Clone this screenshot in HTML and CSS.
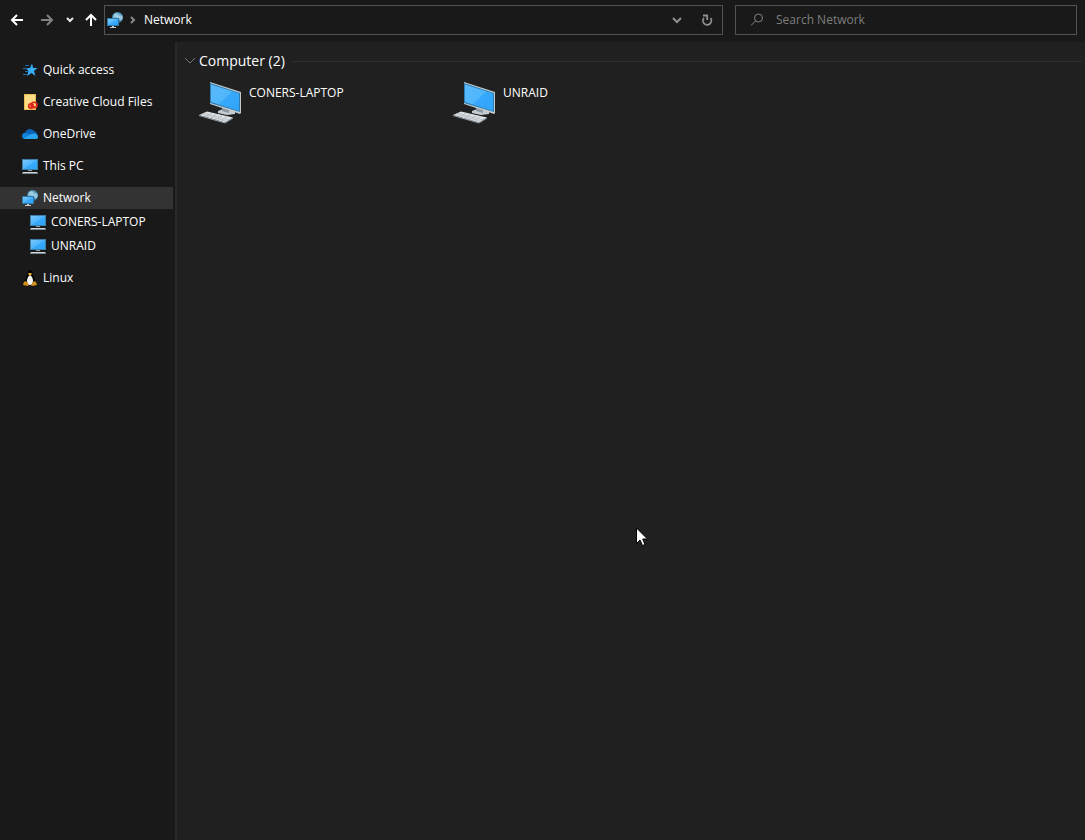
FILE: index.html
```
<!DOCTYPE html>
<html lang="en">
<head>
<meta charset="UTF-8">
<title>Network</title>
<link rel="stylesheet" href="styles.css">
</head>
<body>

<!-- shared icons -->
<svg class="defs" aria-hidden="true">
	<defs>
		<linearGradient id="screen" x1="0" y1="0" x2="1" y2="1">
			<stop offset="0" stop-color="#7cc8fb" />
			<stop offset="0.5" stop-color="#4fb5fa" />
			<stop offset="0.52" stop-color="#35a9fb" />
			<stop offset="1" stop-color="#2ea5fc" />
		</linearGradient>
		<linearGradient id="bigScreen" x1="0" y1="0" x2="1" y2="1">
			<stop offset="0" stop-color="#58b9fb" />
			<stop offset="0.5" stop-color="#50b6fb" />
			<stop offset="0.52" stop-color="#37a9fb" />
			<stop offset="1" stop-color="#2fa4fb" />
		</linearGradient>
		<radialGradient id="globe" cx="0.5" cy="0.4" r="0.6">
			<stop offset="0" stop-color="#b5dcec" />
			<stop offset="0.5" stop-color="#5b9fc0" />
			<stop offset="1" stop-color="#2b6486" />
		</radialGradient>
	</defs>
	<symbol id="pc" viewBox="0 0 16 16">
		<rect x="0" y="1" width="16" height="11" fill="#3c7fa8" />
		<rect x="1" y="2" width="14" height="9" fill="url(#screen)" />
		<rect x="6" y="12" width="4" height="1" fill="#8fa0ad" />
		<path d="M1 14h14l1 1v1H0v-1z" fill="#7c8995" />
		<path d="M1 14h14v1H1z" fill="#cfd8df" />
	</symbol>
	<symbol id="network" viewBox="0 0 16 16">
		<circle cx="10.500" cy="5.500" r="5.500" fill="url(#globe)" />
		<path d="M7 2l3-1 1 2-2 2-3 1zM12 4l3-1 1 3-2 3-2-2z" fill="#a9d6e9" opacity=".75" />
		<rect x="0" y="6" width="12" height="8" fill="#3178a4" />
		<rect x="1" y="7" width="10" height="6" fill="url(#screen)" />
		<path d="M5 14h2v1h2v1H3v-1h2z" fill="#c2ccd3" />
	</symbol>
	<symbol id="desktop" viewBox="0 0 44 42">
		<path d="M20 29l5-2 12 2v3l-8 1-9-2z" fill="#c5cdd2" />
		<path d="M24 25l7 2v4l-7-2z" fill="#8c979f" />
		<path d="M12 0l31 10v21l-1 1L12 22z" fill="#c3c9cd" />
		<path d="M12 1l30 10v19L12 21z" fill="#2e7db0" />
		<path d="M13 2.500l28 9V29L13 20z" fill="url(#bigScreen)" />
		<path d="M9 29.500l26 6-8 5L1 33z" fill="#dfe3e6" />
		<path d="M1 33l26 7.500 8-5v1l-8 5L1 34z" fill="#98a2aa" />
		<path d="M6 31l25 7M4 32l25 7.500M14 31l-6 4M19 32l-6 4M24 33.500l-6 4M29 34.500l-6 4" fill="none" stroke="#a4adb4" stroke-width=".6" />
	</symbol>
</svg>

<header class="toolbar">
	<nav class="history" aria-label="History">
		<button type="button" class="navBtn" aria-label="Back">
			<svg width="14" height="14" viewBox="0 0 14 14"><path d="M13 7H2M7 2L2 7l5 5" stroke="#fff" stroke-width="2" fill="none" /></svg>
		</button>
		<button type="button" class="navBtn" aria-label="Forward">
			<svg width="14" height="14" viewBox="0 0 14 14"><path d="M1 7h11M7 2l5 5-5 5" stroke="#838383" stroke-width="2" fill="none" /></svg>
		</button>
		<button type="button" class="navBtn small" aria-label="Recent locations">
			<svg width="8" height="6" viewBox="0 0 8 6"><path d="M1 1l3 3 3-3" stroke="#e8e8e8" stroke-width="2" fill="none" /></svg>
		</button>
		<button type="button" class="navBtn up" aria-label="Up">
			<svg width="14" height="14" viewBox="0 0 14 14"><path d="M7 13V2M2 7l5-5 5 5" stroke="#fff" stroke-width="2" fill="none" /></svg>
		</button>
	</nav>

	<div class="address">
		<svg class="icon" aria-hidden="true"><use href="#network" /></svg>
		<svg class="crumbArrow" width="6" height="8" viewBox="0 0 6 8" aria-hidden="true"><path d="M1 1l3 3-3 3" stroke="#8a8a8a" stroke-width="2" fill="none" /></svg>
		<a class="crumb" href="#">Network</a>
		<button type="button" class="boxBtn" aria-label="Previous locations">
			<svg width="10" height="8" viewBox="0 0 10 8"><path d="M1 2l4 4 4-4" stroke="#8f8f8f" stroke-width="2" fill="none" /></svg>
		</button>
		<button type="button" class="boxBtn" aria-label="Refresh">
			<svg width="12" height="12" viewBox="0 0 12 12"><path d="M3 3.800a4.200 4.200 0 1 0 6.500.200" stroke="#8f8f8f" stroke-width="1.800" fill="none" /><path d="M2 1.500h4.200V6" stroke="#8f8f8f" stroke-width="1.800" fill="none" /></svg>
		</button>
	</div>

	<label class="search">
		<svg width="14" height="14" viewBox="0 0 14 14" aria-hidden="true"><circle cx="8.500" cy="5" r="4" stroke="#838383" fill="none" /><path d="M5.500 8L1 12.500" stroke="#838383" fill="none" /></svg>
		<input type="search" placeholder="Search Network" aria-label="Search Network">
	</label>
</header>

<div class="body">
	<nav class="sidebar" aria-label="Navigation pane">
		<ul class="tree">
			<li>
				<a href="#">
					<svg class="icon" viewBox="0 0 16 16" aria-hidden="true">
						<path d="M10 1.500l1.200 4.500H15.500l-3.500 3 1.500 5-4-3L5 14l1.500-5L3.500 6H8z" fill="#35aef8" />
						<path d="M3 3.500h4M1 6.500h5M3 9.500h3M1 12.500h4" stroke="#1b6fae" fill="none" />
					</svg>
					Quick access
				</a>
			</li>
			<li>
				<a href="#">
					<svg class="icon" viewBox="0 0 16 16" aria-hidden="true">
						<path d="M2 0h12v16H2z" fill="#e9bc55" />
						<path d="M3 1h10v14H3z" fill="#fddc86" />
						<ellipse cx="9" cy="12" rx="2.300" ry="2.200" fill="none" stroke="#d91a14" stroke-width="1.600" />
						<ellipse cx="12" cy="11" rx="3" ry="2.700" fill="none" stroke="#e2231a" stroke-width="1.600" />
						<path d="M9 10l4 3.500" stroke="#e2231a" stroke-width="1.500" fill="none" />
					</svg>
					Creative Cloud Files
				</a>
			</li>
			<li>
				<a href="#">
					<svg class="icon" viewBox="0 0 16 16" aria-hidden="true">
						<path d="M3 7c1-4.500 7-5.500 9-2 2 .500 3 2 3 4l-7 2-6-2z" fill="#0a61b8" />
						<path d="M0 10c0-3 3-4 6-2.500l5 4L3 13c-2 0-3-1-3-3z" fill="#1380d8" />
						<path d="M1.500 12.500L9 8c3-1.500 7 0 7 2.500S15 13 13 13H3z" fill="#27a4ee" />
					</svg>
					OneDrive
				</a>
			</li>
			<li>
				<a href="#"><svg class="icon" aria-hidden="true"><use href="#pc" /></svg>This PC</a>
			</li>
			<li>
				<a class="selected" href="#" aria-current="page"><svg class="icon" aria-hidden="true"><use href="#network" /></svg>Network</a>
				<ul class="children">
					<li><a href="#"><svg class="icon" aria-hidden="true"><use href="#pc" /></svg>CONERS-LAPTOP</a></li>
					<li><a href="#"><svg class="icon" aria-hidden="true"><use href="#pc" /></svg>UNRAID</a></li>
				</ul>
			</li>
			<li>
				<a href="#">
					<svg class="icon" viewBox="0 0 16 16" aria-hidden="true">
						<path d="M8 0c2 0 2.500 2 2.500 4 1 2 3 4 2.500 8H3c-.500-4 1.500-6 2.500-8C5.500 2 6 0 8 0z" fill="#050505" />
						<path d="M8 5c1.500 1 3 3 3 5.500S10 15 8 15s-3-2-3-4.500S6.500 6 8 5z" fill="#f5f5f5" />
						<path d="M6.500 3h3v1.500L8 6 6.500 4.500z" fill="#e8a81c" />
						<path d="M2 12l2-1 3 4-1 1-5-1zM14 12l-2-1-3 4 1 1 5-1z" fill="#d3921a" />
					</svg>
					Linux
				</a>
			</li>
		</ul>
	</nav>

	<main class="content">
		<h2 class="groupHead">
			<button type="button" class="groupBtn" aria-expanded="true">
				<svg width="12" height="8" viewBox="0 0 12 8" aria-hidden="true"><path d="M1 1l5 5 5-5" stroke="#777" fill="none" /></svg>
				Computer (2)
			</button>
		</h2>
		<div class="tiles">
			<a class="tile" href="#"><svg class="tileIcon" aria-hidden="true"><use href="#desktop" /></svg>CONERS-LAPTOP</a>
			<a class="tile" href="#"><svg class="tileIcon" aria-hidden="true"><use href="#desktop" /></svg>UNRAID</a>
		</div>
	</main>
</div>

<!-- mouse pointer -->
<svg class="pointer" width="12" height="19" viewBox="0 0 12 19" aria-hidden="true">
	<path d="M.5 1v15.500l3.500-3.500 2.500 5.500 2.500-1-2.300-5.500H11.500z" fill="#fff" stroke="#000" />
</svg>

</body>
</html>
```
FILE: styles.css
```
* {
	box-sizing: border-box;
}

html, body {
	height: 100%;
	margin: 0;
}

body {
	display: flex;
	flex-direction: column;
	position: relative;
	background: #191919;
	color: #fff;
	font: 12px/16px "Segoe UI", "Open Sans", sans-serif;
	overflow: hidden;
}

a {
	color: inherit;
	text-decoration: none;
}

button {
	display: flex;
	align-items: center;
	justify-content: center;
	padding: 0;
	border: 0;
	background: none;
	color: inherit;
	font: inherit;
}

ul {
	margin: 0;
	padding: 0;
	list-style: none;
}

svg {
	flex: none;
}

.defs {
	position: absolute;
	width: 0;
	height: 0;
}

.icon {
	width: 16px;
	height: 16px;
}

/* top bar */
.toolbar {
	display: flex;
	flex: none;
	height: 42px;
	padding: 5px 8px 7px 2px;
}

.history {
	display: flex;
	width: 102px;
}

.navBtn {
	width: 30px;
	height: 30px;
}

.navBtn.small {
	width: 16px;
}

.navBtn.up {
	width: 26px;
}

.address {
	display: flex;
	flex: 1;
	align-items: center;
	min-width: 0;
	padding: 0 0 0 2px;
	border: 1px solid #535353;
}

.crumbArrow {
	margin: 0 8px 0 7px;
}

.crumb {
	flex: 1;
}

.boxBtn {
	width: 30px;
	height: 28px;
}

.search {
	display: flex;
	flex: none;
	width: 342px;
	align-items: center;
	gap: 12px;
	margin-left: 12px;
	padding-left: 14px;
	border: 1px solid #535353;
}

.search input {
	flex: 1;
	min-width: 0;
	padding: 0;
	border: 0;
	outline: 0;
	background: none;
	color: #fff;
	font: inherit;
}

.search input::placeholder {
	color: #7d7d7d;
	opacity: 1;
}

/* folder tree */
.body {
	display: flex;
	flex: 1;
	min-height: 0;
}

.sidebar {
	flex: none;
	width: 177px;
	padding: 17px 2px 0 0;
	border-right: 2px solid #292929;
}

.tree > li {
	margin-bottom: 10px;
}

.tree a {
	display: flex;
	align-items: center;
	gap: 5px;
	height: 22px;
	padding-left: 22px;
}

.tree .selected {
	background: #333;
}

.children li {
	margin-top: 2px;
}

.children a {
	padding-left: 30px;
}

/* file list */
.content {
	flex: 1;
	min-width: 0;
	padding: 9px 3px 0 7px;
	background: #202020;
}

.groupHead {
	display: flex;
	align-items: center;
	gap: 6px;
	margin: 0;
	font: 14px/20px "Segoe UI", "Open Sans", sans-serif;
}

.groupHead::after {
	content: "";
	flex: 1;
	height: 1px;
	background: #2e2e2e;
}

.groupBtn {
	gap: 3px;
}

.tiles {
	display: flex;
	flex-wrap: wrap;
	padding: 11px 0 0 14px;
}

.tile {
	display: flex;
	gap: 7px;
	width: 254px;
	line-height: 22px;
}

.tileIcon {
	width: 44px;
	height: 42px;
}

.pointer {
	position: absolute;
	left: 636px;
	top: 527px;
}
```
